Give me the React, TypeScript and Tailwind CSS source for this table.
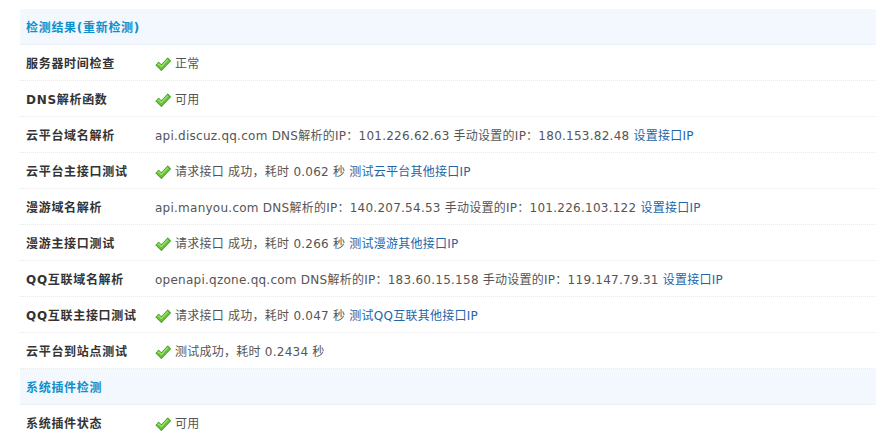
import React from 'react';

const Check: React.FC = () => (
  <svg width="16" height="14" viewBox="0 0 15 13" className="mr-[4px] shrink-0">
    <path d="M1 7.5 L3.5 5 L6 7.5 L12 1 L14.5 3.5 L6 12.5 Z" fill="#6cc63a" stroke="#4ea52a" strokeWidth="1" strokeLinejoin="round" />
    <path d="M2.5 7.3 L3.5 6.3 L6 8.8 L12 2.4" fill="none" stroke="#a6e27a" strokeWidth="1" />
  </svg>
);

const Link: React.FC<{ children: React.ReactNode }> = ({ children }) => (
  <a className="text-[#2366a8] ml-[4px]" href="#">{children}</a>
);

const Row: React.FC<{ label: string; children: React.ReactNode }> = ({ label, children }) => (
  <div className="flex h-[36px] items-center pt-[2px] border-b border-dotted border-[#dcedf9]">
    <div className="w-[135px] shrink-0 pl-[6px] font-bold text-[#333] tracking-[0.7px]">{label}</div>
    <div className="flex items-center text-[#555] whitespace-nowrap tracking-[0.25px]">{children}</div>
  </div>
);

const Header: React.FC<{ title: string }> = ({ title }) => (
  <div className="flex h-[36px] items-center pt-[2px] border-b border-dotted border-[#dcedf9] bg-[#f2f8fd] pl-[6px] font-bold text-[#0e90cc] tracking-[0.7px]">
    {title}
  </div>
);

const Ok: React.FC<{ children: React.ReactNode }> = ({ children }) => (
  <>
    <Check />
    <span>{children}</span>
  </>
);

const App: React.FC = () => {
  return (
    <div
      className="bg-white w-[876px] h-[435px] overflow-hidden pt-[9px] pl-[20px] text-[12px]"
      style={{ fontFamily: '"DejaVu Sans", "Noto Sans CJK SC", sans-serif' }}
    >
      <Header title="检测结果(重新检测)" />
      <Row label="服务器时间检查"><Ok>正常</Ok></Row>
      <Row label="DNS解析函数"><Ok>可用</Ok></Row>
      <Row label="云平台域名解析">
        <span>api.discuz.qq.com DNS解析的IP：101.226.62.63 手动设置的IP：180.153.82.48</span>
        <Link>设置接口IP</Link>
      </Row>
      <Row label="云平台主接口测试">
        <Ok>请求接口 成功，耗时 0.062 秒</Ok>
        <Link>测试云平台其他接口IP</Link>
      </Row>
      <Row label="漫游域名解析">
        <span>api.manyou.com DNS解析的IP：140.207.54.53 手动设置的IP：101.226.103.122</span>
        <Link>设置接口IP</Link>
      </Row>
      <Row label="漫游主接口测试">
        <Ok>请求接口 成功，耗时 0.266 秒</Ok>
        <Link>测试漫游其他接口IP</Link>
      </Row>
      <Row label="QQ互联域名解析">
        <span>openapi.qzone.qq.com DNS解析的IP：183.60.15.158 手动设置的IP：119.147.79.31</span>
        <Link>设置接口IP</Link>
      </Row>
      <Row label="QQ互联主接口测试">
        <Ok>请求接口 成功，耗时 0.047 秒</Ok>
        <Link>测试QQ互联其他接口IP</Link>
      </Row>
      <Row label="云平台到站点测试"><Ok>测试成功，耗时 0.2434 秒</Ok></Row>
      <Header title="系统插件检测" />
      <Row label="系统插件状态"><Ok>可用</Ok></Row>
    </div>
  );
};

export default App;
